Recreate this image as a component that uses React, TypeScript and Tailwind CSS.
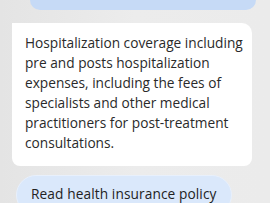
import React from 'react';

const font = { fontFamily: '"Open Sans", "Noto Sans", sans-serif' };

export default function App() {
  return (
    <div
      className="w-[270px] h-[203px] overflow-hidden bg-gradient-to-r from-[#e4e4e4] via-[#ececec] to-[#ebebeb] text-[#2a2a2a]"
      style={font}
    >
      <div className="flex flex-col">
        <div className="ml-[30px] mr-[14px] -mt-[30px] h-[40px] rounded-b-[10px] bg-[#c6daf6]" />
        <div className="ml-[12px] mr-[18px] mt-[13px] rounded-tr-[10px] rounded-b-[8px] bg-white pl-[13px] pr-[6px] pt-[10px] pb-[13px] text-[13.7px] leading-[20px]">
          Hospitalization coverage including pre and posts hospitalization expenses, including the fees of specialists and other medical practitioners for post-treatment consultations.
        </div>
        <div className="mt-[9px] ml-[16px] flex">
          <div className="rounded-full border border-[#e8f0fc] bg-[#dae8fb] px-[14px] pt-[8px] pb-[10px] text-[13.7px] font-medium leading-[20px] tracking-[0.1px] text-[#222]">
            Read health insurance policy
          </div>
        </div>
      </div>
    </div>
  );
}
